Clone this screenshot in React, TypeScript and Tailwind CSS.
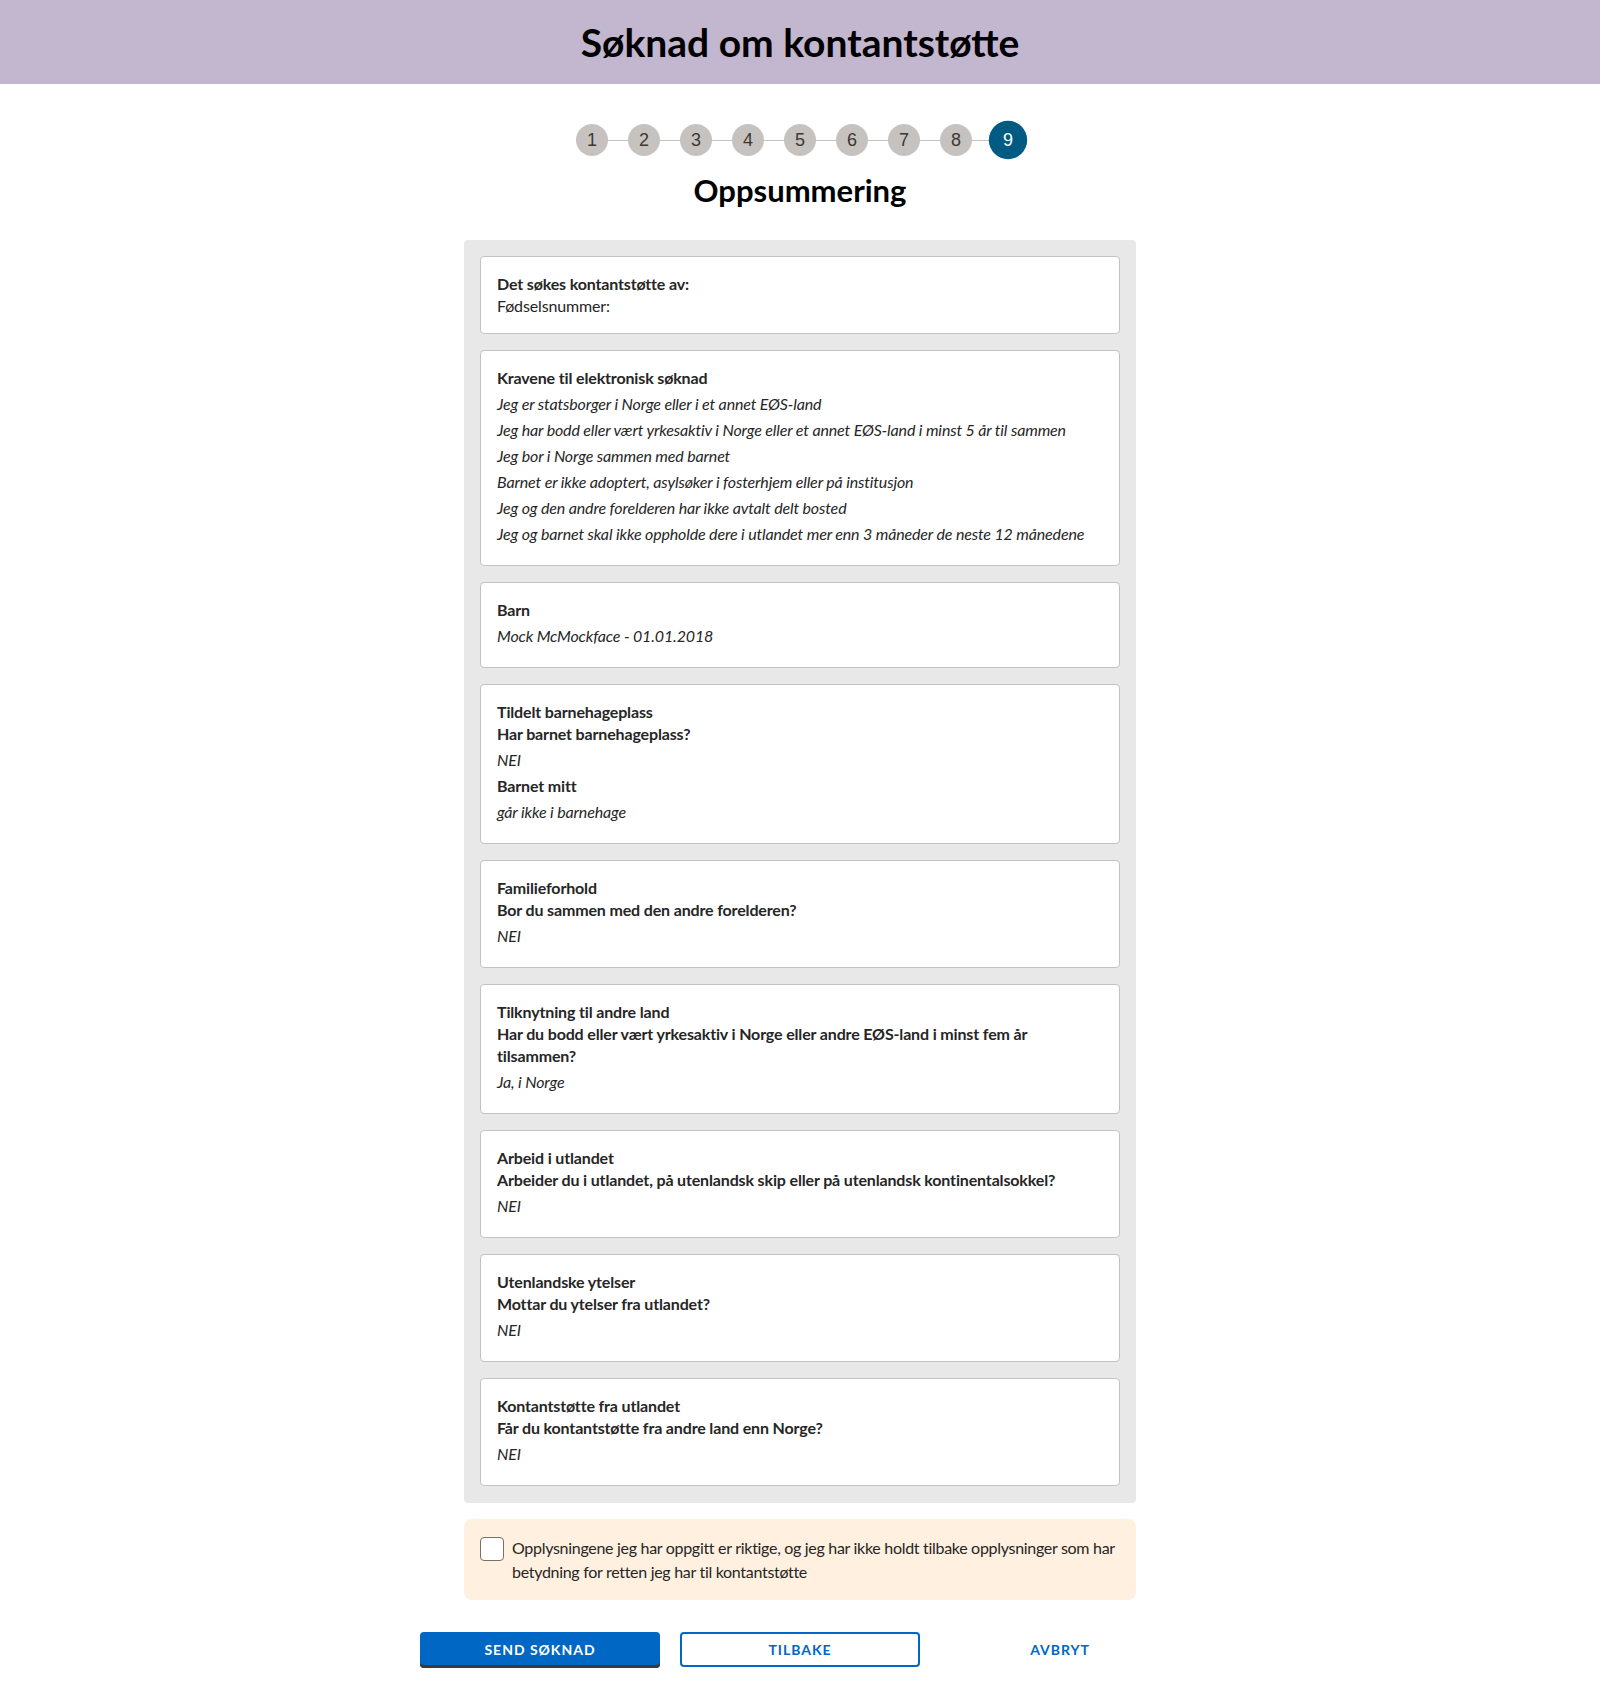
import React, { useState } from "react";

type Item = { text: string; kind: "q" | "a" };

type Section = {
  title: string;
  items: Item[];
};

const krav = [
  "Jeg er statsborger i Norge eller i et annet EØS-land",
  "Jeg har bodd eller vært yrkesaktiv i Norge eller et annet EØS-land i minst 5 år til sammen",
  "Jeg bor i Norge sammen med barnet",
  "Barnet er ikke adoptert, asylsøker i fosterhjem eller på institusjon",
  "Jeg og den andre forelderen har ikke avtalt delt bosted",
  "Jeg og barnet skal ikke oppholde dere i utlandet mer enn 3 måneder de neste 12 månedene",
];

const sections: Section[] = [
  {
    title: "Tildelt barnehageplass",
    items: [
      { text: "Har barnet barnehageplass?", kind: "q" },
      { text: "NEI", kind: "a" },
      { text: "Barnet mitt", kind: "q" },
      { text: "går ikke i barnehage", kind: "a" },
    ],
  },
  {
    title: "Familieforhold",
    items: [
      { text: "Bor du sammen med den andre forelderen?", kind: "q" },
      { text: "NEI", kind: "a" },
    ],
  },
  {
    title: "Tilknytning til andre land",
    items: [
      { text: "Har du bodd eller vært yrkesaktiv i Norge eller andre EØS-land i minst fem år tilsammen?", kind: "q" },
      { text: "Ja, i Norge", kind: "a" },
    ],
  },
  {
    title: "Arbeid i utlandet",
    items: [
      { text: "Arbeider du i utlandet, på utenlandsk skip eller på utenlandsk kontinentalsokkel?", kind: "q" },
      { text: "NEI", kind: "a" },
    ],
  },
  {
    title: "Utenlandske ytelser",
    items: [
      { text: "Mottar du ytelser fra utlandet?", kind: "q" },
      { text: "NEI", kind: "a" },
    ],
  },
  {
    title: "Kontantstøtte fra utlandet",
    items: [
      { text: "Får du kontantstøtte fra andre land enn Norge?", kind: "q" },
      { text: "NEI", kind: "a" },
    ],
  },
];

const Card: React.FC<{ children: React.ReactNode }> = ({ children }) => (
  <div className="flow-root rounded border border-[#c6c2bf] bg-white px-4 py-4 tracking-[-0.15px]">{children}</div>
);

const Svar: React.FC<{ children: React.ReactNode }> = ({ children }) => (
  <p className="my-1 text-base leading-[22px] italic">{children}</p>
);

const Stepper: React.FC = () => {
  const steps = [1, 2, 3, 4, 5, 6, 7, 8, 9];
  return (
    <div className="flex items-center justify-center">
      {steps.map((s, i) => (
        <React.Fragment key={s}>
          {i > 0 && <div className="h-px w-5 bg-[#c6c2bf]"></div>}
          <div
            className={
              s === 9
                ? "flex h-8 w-8 scale-[1.2] items-center justify-center rounded-full bg-[#005b82] text-[15px] text-white"
                : "flex h-8 w-8 items-center justify-center rounded-full bg-[#c6c2bf] text-lg text-[#3e3832]"
            }
            style={{ fontFamily: "'Liberation Sans', Arial, sans-serif" }}
          >
            {s}
          </div>
        </React.Fragment>
      ))}
    </div>
  );
};

const App: React.FC = () => {
  const [bekreftet, setBekreftet] = useState(false);

  return (
    <div className="min-h-screen bg-white pb-8 text-[#262626]" style={{ fontFamily: "Lato, 'Open Sans', sans-serif" }}>
      <header className="flex h-[84px] items-center justify-center bg-[#c3b6cf]">
        <h1 className="text-[39px] font-bold text-black">Søknad om kontantstøtte</h1>
      </header>

      <div className="mt-10">
        <Stepper />
      </div>
      <h2 className="mt-4 text-center text-[31px] leading-9 font-bold text-black">Oppsummering</h2>

      <div className="mx-auto mt-8 w-[672px]">
        <div className="flex flex-col gap-4 rounded-sm bg-[#e9e8e8] px-4 pt-4 pb-[17px]">
          <Card>
            <p className="text-base leading-[22px] font-bold">Det søkes kontantstøtte av:</p>
            <p className="text-base leading-[22px]">Fødselsnummer:</p>
          </Card>

          <Card>
            <p className="text-base leading-[22px] font-bold">Kravene til elektronisk søknad</p>
            {krav.map((k) => (
              <Svar key={k}>{k}</Svar>
            ))}
          </Card>

          <Card>
            <p className="text-base leading-[22px] font-bold">Barn</p>
            <Svar>Mock McMockface - 01.01.2018</Svar>
          </Card>

          {sections.map((sec) => (
            <Card key={sec.title}>
              <p className="text-base leading-[22px] font-bold">{sec.title}</p>
              {sec.items.map((it, i) =>
                it.kind === "q" ? (
                  <p key={i} className="text-base leading-[22px] font-bold">
                    {it.text}
                  </p>
                ) : (
                  <Svar key={i}>{it.text}</Svar>
                )
              )}
            </Card>
          ))}
        </div>

        <label className="mt-4 flex cursor-pointer gap-2 rounded-lg bg-[#fff0df] px-4 pt-[17px] pb-4">
          <input
            type="checkbox"
            checked={bekreftet}
            onChange={(e) => setBekreftet(e.target.checked)}
            className="mt-[1px] h-6 w-6 shrink-0 appearance-none rounded border border-[#78706a] bg-white checked:bg-[#0067c5]"
          />
          <span className="text-base leading-6 tracking-[-0.3px]">
            Opplysningene jeg har oppgitt er riktige, og jeg har ikke holdt tilbake opplysninger som har betydning for retten jeg har til kontantstøtte
          </span>
        </label>
      </div>

      <div className="mt-8 flex justify-center gap-5">
        <button className="h-[36px] w-60 rounded-sm bg-[#0067c5] text-sm font-bold tracking-[0.07em] text-white uppercase shadow-[inset_0_-3px_0_#3e3832]">
          Send søknad
        </button>
        <button className="h-[35px] w-60 rounded-sm border-2 border-[#0067c5] bg-white text-sm font-bold tracking-[0.07em] text-[#0067c5] uppercase">
          Tilbake
        </button>
        <button className="h-[35px] w-60 text-sm font-bold tracking-[0.07em] text-[#0067c5] uppercase">Avbryt</button>
      </div>
    </div>
  );
};

export default App;
